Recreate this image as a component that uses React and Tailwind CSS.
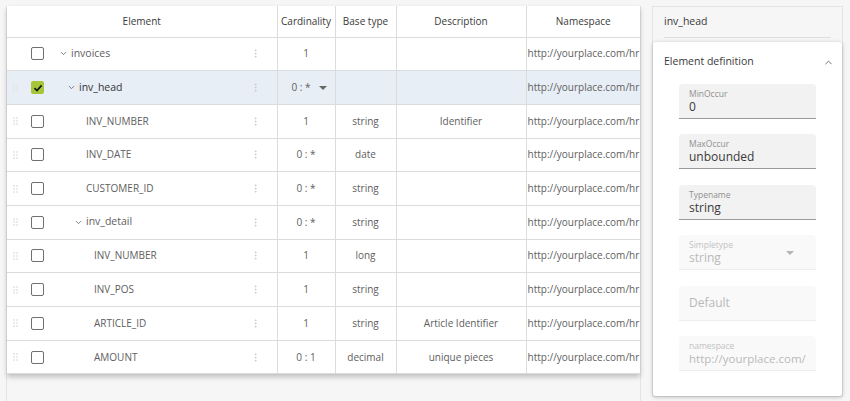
import { ChevronDown, ChevronUp, EllipsisVertical } from 'lucide-react'

// ml = offset of the chevron (toggle rows) or text (leaf rows) after the checkbox
const rows = [
  { name: 'invoices', ml: 'ml-[15px]', toggle: true, card: '1', type: '', desc: '', handle: false },
  { name: 'inv_head', ml: 'ml-[23px]', toggle: true, card: '0 : *', type: '', desc: '', selected: true, checked: true },
  { name: 'INV_NUMBER', ml: 'ml-[42px]', card: '1', type: 'string', desc: 'Identifier' },
  { name: 'INV_DATE', ml: 'ml-[42px]', card: '0 : *', type: 'date', desc: '' },
  { name: 'CUSTOMER_ID', ml: 'ml-[42px]', card: '0 : *', type: 'string', desc: '' },
  { name: 'inv_detail', ml: 'ml-[30px]', toggle: true, card: '0 : *', type: 'string', desc: '' },
  { name: 'INV_NUMBER', ml: 'ml-[50px]', card: '1', type: 'long', desc: '' },
  { name: 'INV_POS', ml: 'ml-[50px]', card: '1', type: 'string', desc: '' },
  { name: 'ARTICLE_ID', ml: 'ml-[50px]', card: '1', type: 'string', desc: 'Article Identifier' },
  { name: 'AMOUNT', ml: 'ml-[50px]', card: '0 : 1', type: 'decimal', desc: 'unique pieces' },
]

const DragHandle = ({ show }) => (
  <div className="w-[12px] flex justify-center">
    {show !== false && (
      <div className="grid grid-cols-2 gap-[1px]">
        {[...Array(6)].map((_, i) => (
          <span key={i} className="w-[2px] h-[2px] bg-[#e4e4e4] rounded-full" />
        ))}
      </div>
    )}
  </div>
)

const Checkbox = ({ checked }) =>
  checked ? (
    <div className="w-[13px] h-[13px] rounded-[2px] bg-[#a6c63a] flex items-center justify-center">
      <svg width="10" height="10" viewBox="0 0 10 10">
        <path d="M1.5 5.2 L4 7.6 L8.6 2.4" fill="none" stroke="#111" strokeWidth="1.6" />
      </svg>
    </div>
  ) : (
    <div className="w-[13px] h-[13px] rounded-[2px] border-[1.5px] border-[#707070] bg-white" />
  )

const Field = ({ label, value, disabled, select, placeholder, small }) => (
  <div
    className={`h-[35px] rounded-t-[4px] px-[10px] relative flex flex-col ${
      placeholder ? 'justify-center' : 'pt-[5px]'
    } ${disabled ? 'bg-[#f9f9f9] border-b border-[#eeeeee]' : 'bg-[#f2f2f2] border-b border-[#9a9a9a]'}`}
  >
    {placeholder ? (
      <span className="text-[12px] text-[#b8b8b8]">{placeholder}</span>
    ) : (
      <>
        <span className={`text-[8.5px] leading-[10px] ${disabled ? 'text-[#c2c2c2]' : 'text-[#909090]'}`}>{label}</span>
        <span
          className={`${small ? 'text-[11.5px]' : 'text-[12px]'} leading-[16px] whitespace-nowrap ${
            disabled ? 'text-[#bababa]' : 'text-[#3a3a3a]'
          }`}
        >
          {value}
        </span>
      </>
    )}
    {select && (
      <span className="absolute right-[22px] top-[16px] w-0 h-0 border-x-[4px] border-x-transparent border-t-[4px] border-t-[#b5b5b5]" />
    )}
  </div>
)

export default function App() {
  return (
    <div
      className="w-[850px] h-[401px] bg-[#f6f6f6] flex gap-[11px] pl-[6px] pt-[6px] overflow-hidden"
      style={{ fontFamily: '"Open Sans", "Liberation Sans", sans-serif' }}
    >
      {/* Table area */}
      <div className="w-[635px] shrink-0 border-l border-r border-[#e4e4e4]">
        <table className="w-[633px] table-fixed border-collapse bg-white shadow-[0_3px_5px_rgba(0,0,0,0.22)] text-[10px] text-[#606060]">
          <colgroup>
            <col className="w-[270px]" />
            <col className="w-[58px]" />
            <col className="w-[61px]" />
            <col className="w-[130px]" />
            <col className="w-[114px]" />
          </colgroup>
          <thead>
            <tr className="h-[31px] text-[#3a3a3a]">
              {['Element', 'Cardinality', 'Base type', 'Description', 'Namespace'].map((h) => (
                <th key={h} className="font-normal border border-[#dcdcdc] border-l-0 last:border-r-0 border-t-0">
                  {h}
                </th>
              ))}
            </tr>
          </thead>
          <tbody>
            {rows.map((r, i) => (
              <tr key={i} className={`h-[33.7px] ${r.selected ? 'bg-[#e8eef6]' : ''}`}>
                <td className="border-b border-r border-[#dcdcdc] p-0">
                  <div className="flex items-center pl-[2px] pr-[16px]">
                    <DragHandle show={r.handle} />
                    <div className="ml-[10px]">
                      <Checkbox checked={r.checked} />
                    </div>
                    <div className={`flex items-center flex-1 ${r.ml}`}>
                      {r.toggle && <ChevronDown size={9} strokeWidth={2} className="text-[#555] mr-[3px]" />}
                      <span className={`${r.toggle ? 'text-[10.5px]' : ''} ${r.selected ? 'text-[#333]' : ''}`}>{r.name}</span>
                    </div>
                    <EllipsisVertical size={11} strokeWidth={2} className="text-[#c8c8c8]" />
                  </div>
                </td>
                <td className="border-b border-r border-[#dcdcdc] text-center p-0">
                  {r.selected ? (
                    <div className="flex items-center justify-center gap-[8px] pl-[6px]">
                      <span>{r.card}</span>
                      <span className="w-0 h-0 border-x-[4px] border-x-transparent border-t-[4px] border-t-[#666]" />
                    </div>
                  ) : (
                    r.card
                  )}
                </td>
                <td className="border-b border-r border-[#dcdcdc] text-center">{r.type}</td>
                <td className="border-b border-r border-[#dcdcdc] text-center">{r.desc}</td>
                <td className="border-b border-[#dcdcdc] pl-[1px] whitespace-nowrap overflow-hidden">
                  http://yourplace.com/hr
                </td>
              </tr>
            ))}
          </tbody>
        </table>
      </div>

      {/* Detail panel */}
      <div className="w-[191px] shrink-0 h-[391px] border border-[#e4e4e4] flex flex-col">
        <div className="mx-[11px] h-[31px] border-b border-[#dedede] flex items-center text-[10.5px] text-[#3a3a3a]">
          inv_head
        </div>
        <div className="mt-[4px] flex-1 bg-white shadow-[0_1px_4px_rgba(0,0,0,0.25)] rounded-[3px] flex flex-col">
          <div className="h-[40px] flex items-center justify-between pl-[11px] pr-[8px] text-[10.5px] text-[#3a3a3a]">
            <span>Element definition</span>
            <ChevronUp size={11} strokeWidth={2} className="text-[#666]" />
          </div>
          <div className="px-[26px] flex flex-col gap-[15.4px] mt-[2px]">
            <Field label="MinOccur" value="0" />
            <Field label="MaxOccur" value="unbounded" />
            <Field label="Typename" value="string" />
            <Field label="Simpletype" value="string" disabled select />
            <Field placeholder="Default" disabled />
            <Field label="namespace" value="http://yourplace.com/" disabled small />
          </div>
        </div>
      </div>
    </div>
  )
}
